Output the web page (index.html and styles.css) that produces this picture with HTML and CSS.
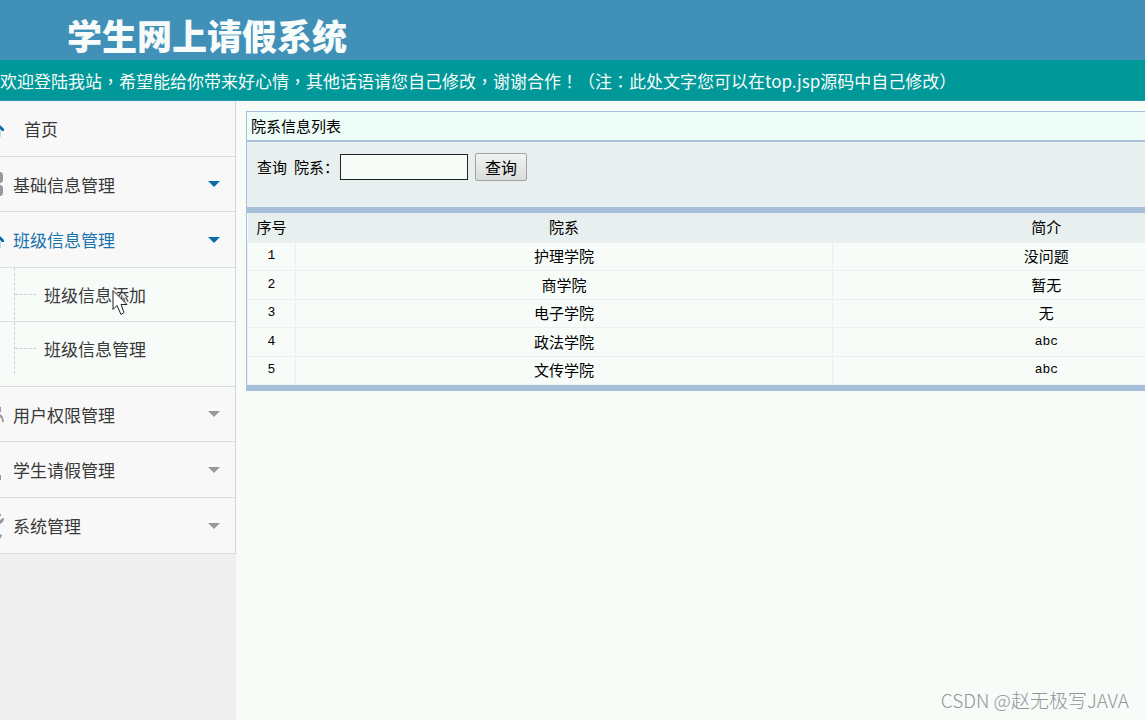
FILE: index.html
```html
<!DOCTYPE html>
<html lang="zh-CN">
<head>
<meta charset="utf-8">
<meta name="viewport" content="width=device-width, initial-scale=1">
<title>学生网上请假系统</title>
<link rel="stylesheet" href="styles.css">
</head>
<body>
<header class="top">
  <h1 class="brand">学生网上请假系统</h1>
  <p class="notice">欢迎登陆我站<span class="punct" lang="zh-TW">，</span>希望能给你带来好心情<span class="punct" lang="zh-TW">，</span>其他话语请您自己修改<span class="punct" lang="zh-TW">，</span>谢谢合作<span class="punct" lang="zh-TW">！（</span>注<span class="punct" lang="zh-TW">：</span>此处文字您可以在top.jsp源码中自己修改<span class="punct" lang="zh-TW">）</span></p>
</header>
<div class="body">
  <nav class="side">
    <ul class="menu">
      <li><a class="item home" href="#"><svg class="icon blue" viewBox="0 0 4 24"><path d="M0 8L4 12V14H2L0 12Z"/><path class="pale" d="M0 14H1V20H0Z"/></svg><span>首页</span></a></li>
      <li><a class="item short" href="#"><svg class="icon" viewBox="0 0 4 24"><path d="M0 0H1Q3 1 3 3V8Q3 10 1 11H0ZM0 13H1Q3 14 3 16V21Q3 23 1 24H0Z"/></svg><span>基础信息管理</span><i class="caret open"></i></a></li>
      <li><a class="item active" href="#"><svg class="icon blue" viewBox="0 0 4 24"><path d="M0 8L4 12V14H2L0 12Z"/><path class="pale" d="M0 14H1V20H0Z"/></svg><span>班级信息管理</span><i class="caret open"></i></a>
        <ul class="sub">
          <li><a class="leaf" href="#">班级信息添加</a></li>
          <li><a class="leaf" href="#">班级信息管理</a></li>
        </ul>
      </li>
      <li><a class="item short" href="#"><svg class="icon" viewBox="0 0 4 24"><path d="M0 5H1V10H0ZM0 12Q3 13 4 20H2Q2 16 0 15Z"/></svg><span>用户权限管理</span><i class="caret"></i></a></li>
      <li><a class="item" href="#"><svg class="icon" viewBox="0 0 4 24"><path d="M0 17H1V22H0Z"/></svg><span>学生请假管理</span><i class="caret"></i></a></li>
      <li><a class="item" href="#"><svg class="icon" viewBox="0 0 4 24"><path d="M0 0H1V2H0ZM0 6L3 4H4Q4 8 0 10ZM0 20L2 21L1 24H0Z"/></svg><span>系统管理</span><i class="caret"></i></a></li>
    </ul>
  </nav>
  <main class="main">
    <section class="panel">
      <h2 class="panel-title">院系信息列表</h2>
      <form class="search" onsubmit="return false">
        <span>查询</span>
        <label for="dept">院系：</label>
        <input class="field" id="dept" type="text">
        <button class="btn" type="submit">查询</button>
      </form>
      <table class="grid">
        <colgroup><col class="c-no"><col class="c-dept"><col class="c-intro"></colgroup>
        <thead><tr><th>序号</th><th>院系</th><th>简介</th></tr></thead>
        <tbody>
          <tr><td class="mono">1</td><td>护理学院</td><td>没问题</td></tr>
          <tr><td class="mono">2</td><td>商学院</td><td>暂无</td></tr>
          <tr><td class="mono">3</td><td>电子学院</td><td>无</td></tr>
          <tr><td class="mono">4</td><td>政法学院</td><td class="mono">abc</td></tr>
          <tr><td class="mono">5</td><td>文传学院</td><td class="mono">abc</td></tr>
        </tbody>
      </table>
    </section>
  </main>
</div>
<svg class="cursor" viewBox="0 0 16 26"><path d="M1 1V20L5 16L9 25L12 23L9 15H15Z"/></svg>
<div class="mark">CSDN @赵无极写JAVA</div>
</body>
</html>
```
FILE: styles.css
```css
* { box-sizing: border-box; }
body {
  margin: 0;
  min-height: 100vh;
  display: flex;
  flex-direction: column;
  overflow: hidden;
  background: #f7fcf9;
  color: #000;
  font-family: "Noto Sans CJK SC", sans-serif;
}
ul { list-style: none; margin: 0; padding: 0; }
a { color: inherit; text-decoration: none; }

.top { background: #4190b8; color: #f7fcfb; }
.brand {
  margin: 0;
  padding: 8px 0 0 67px;
  height: 60px;
  font-size: 35px;
  line-height: 54px;
  font-weight: 900;
}
.notice {
  margin: 0;
  height: 41px;
  background: #009899;
  border-bottom: 1px solid #2c94b4;
  font-size: 17px;
  line-height: 42px;
  white-space: nowrap;
}
.punct { font-family: "Noto Sans CJK TC", sans-serif; }

.body { flex: 1; display: flex; }
.side { flex: 0 0 236px; background: #efefef; font-size: 17px; color: #393939; }
.menu { border-right: 1px solid #d0d8d6; background: #f8f8f8; }
.item {
  display: flex;
  align-items: center;
  height: 56px;
  padding-right: 15px;
  gap: 9px;
  border-bottom: 1px solid #dcdfde;
}
.item span { flex: 1; }
.short { height: 55px; }
.home { gap: 20px; }
.active { color: #1b72ae; }
.icon { width: 4px; height: 24px; fill: #999; }
.blue { fill: #0b6ca5; }
.pale { fill: #b9dcec; }
.caret {
  border: 6px solid transparent;
  border-top-color: #999;
  border-bottom: 0;
}
.open { border-top-color: #0b6ca5; }
.sub {
  position: relative;
  padding-bottom: 12px;
  background: #f7fcf9;
  border-bottom: 1px solid #d8dcda;
}
.sub::before {
  content: "";
  position: absolute;
  left: 14px;
  top: 0;
  bottom: 12px;
  border-left: 1px dashed #ccd3d0;
}
.sub li + li { border-top: 1px solid #dce2df; }
.leaf { display: flex; align-items: center; gap: 8px; height: 53px; padding-left: 15px; }
.sub li + li .leaf { height: 52px; }
.leaf::before { content: ""; width: 21px; border-top: 1px dashed #ccd3d0; }

.main { flex: 1; min-width: 0; overflow: hidden; padding: 10px 0 0 10px; font-size: 15px; }
.panel {
  width: 113%;
  border: 1px solid #a8c0dc;
  border-bottom: 6px solid #a8bfd9;
}
.panel-title {
  margin: 0;
  padding-left: 4px;
  height: 30px;
  background: #effdf8;
  border-bottom: 2px solid #a8c0dc;
  font-size: 15px;
  font-weight: 400;
  line-height: 27px;
}
.search {
  display: flex;
  align-items: flex-start;
  height: 71px;
  padding: 11px 0 0 10px;
  background: #e8efef;
  border-bottom: 6px solid #a8bfd9;
  line-height: 28px;
}
.search label { margin-left: 7px; white-space: nowrap; }
.field {
  width: 128px;
  height: 26px;
  margin: 1px 7px 0 1px;
  border: 1px solid #20242a;
  background: #f7fcf9;
  font-size: 15px;
}
.btn {
  width: 52px;
  height: 28px;
  padding: 0;
  border: 1px solid #a0a4a4;
  border-radius: 2px;
  background: linear-gradient(#f2f3f2, #d8dcda);
  color: #000;
  font: 16px/24px "Noto Sans CJK SC", sans-serif;
}
.grid { width: 100%; border-collapse: collapse; table-layout: fixed; }
.c-no { width: 48px; }
.c-dept { width: 53%; }
th, td { padding: 0; line-height: 26px; font-weight: 400; text-align: center; }
th { background: #e8efef; height: 29px; }
td { height: 28px; border: 1px solid #ebf1f0; }
tbody tr:nth-child(even) td { height: 29px; }
.mono { font-family: "Liberation Mono", monospace; font-size: 13px; }

.cursor {
  position: absolute;
  left: 112px;
  top: 289px;
  width: 16px;
  height: 27px;
  fill: #fff;
  stroke: #222;
}
.mark {
  position: absolute;
  right: 16px;
  bottom: 6px;
  color: #929695;
  font-size: 19px;
  font-weight: 300;
  line-height: 28px;
}
```
